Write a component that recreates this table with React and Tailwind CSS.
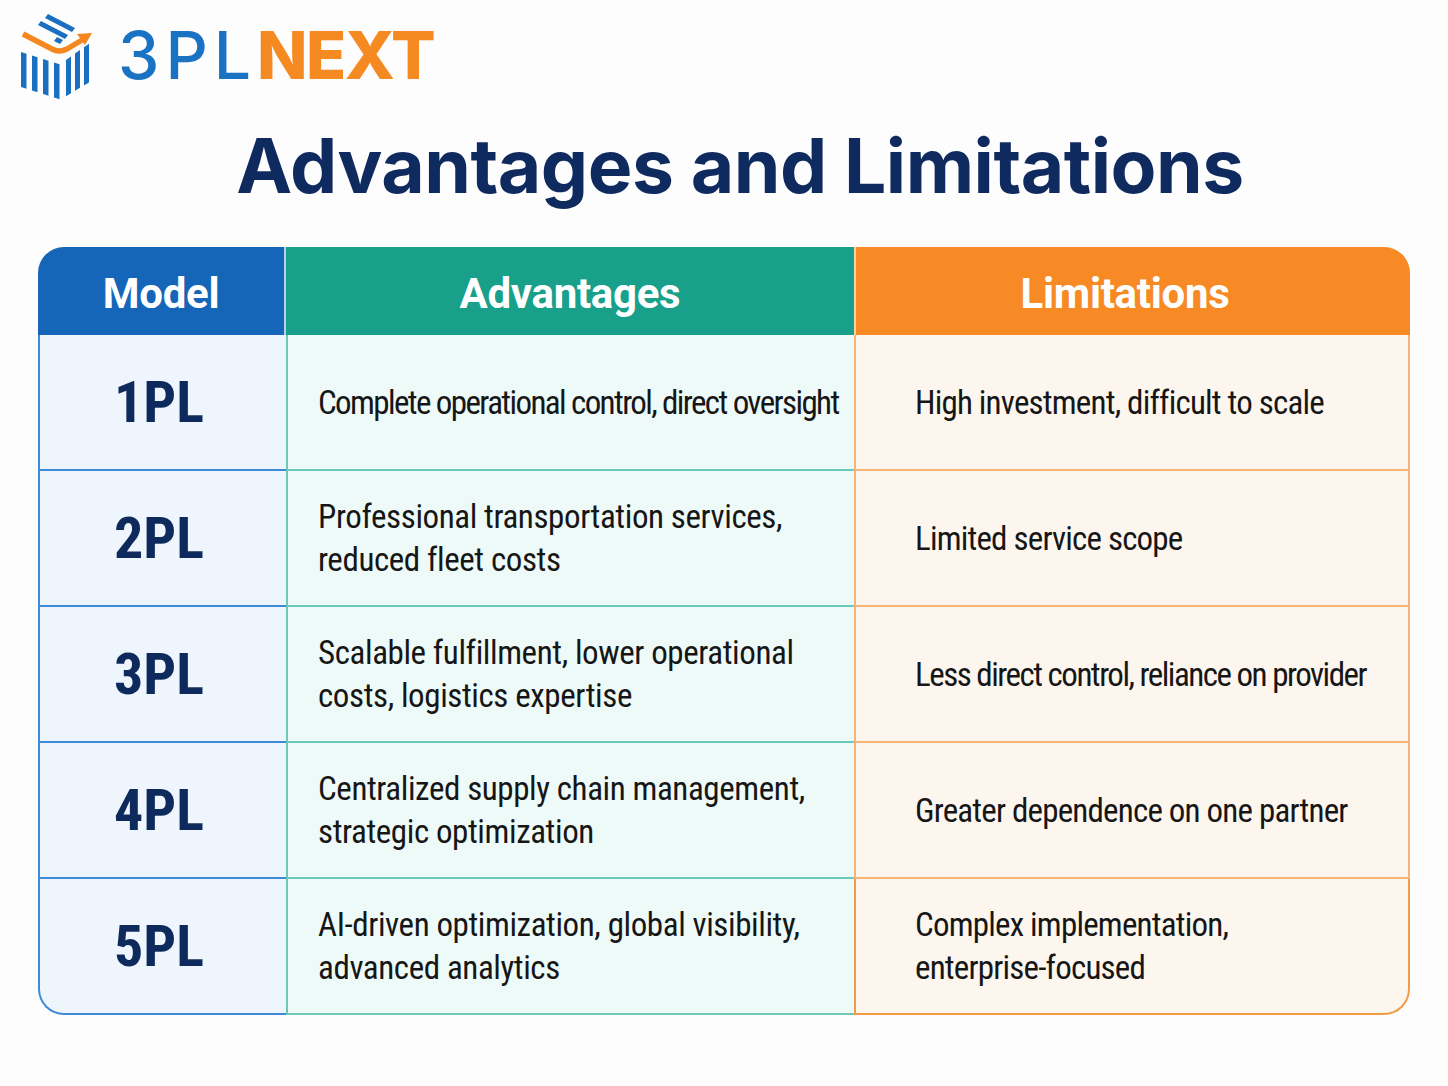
import React from "react";

// per-line tracking where the picture squeezes a long line into its cell
const rows = [
  {
    model: "1PL",
    adv: [["Complete operational control, direct oversight", "tracking-[-1.6px]"]],
    lim: [["High investment, difficult to scale"]],
  },
  {
    model: "2PL",
    adv: [["Professional transportation services,"], ["reduced fleet costs"]],
    lim: [["Limited service scope"]],
  },
  {
    model: "3PL",
    adv: [["Scalable fulfillment, lower operational"], ["costs, logistics expertise"]],
    lim: [["Less direct control, reliance on provider", "tracking-[-1.5px]"]],
  },
  {
    model: "4PL",
    adv: [["Centralized supply chain management,"], ["strategic optimization"]],
    lim: [["Greater dependence on one partner"]],
  },
  {
    model: "5PL",
    adv: [["AI-driven optimization, global visibility,"], ["advanced analytics"]],
    lim: [["Complex implementation,"], ["enterprise-focused"]],
  },
];

const condensed = {
  fontFamily: '"Roboto Condensed", "Roboto", sans-serif',
  fontStretch: "75%",
};

function LogoMark() {
  const left = [6, 17, 28, 39];
  const right = [51, 60, 69];
  return (
    <svg viewBox="0 0 85 90" className="h-[90px] w-[85px]" aria-hidden="true">
      {left.map((x) => {
        const w = 5.5;
        const t = (v) => 42 + (v - 6) * 0.32;
        const b = (v) => 77 + (v - 6) * 0.32;
        return (
          <polygon
            key={x}
            points={`${x},${t(x)} ${x + w},${t(x + w)} ${x + w},${b(x + w)} ${x},${b(x)}`}
            fill="#1a6fc0"
          />
        );
      })}
      {right.map((x) => {
        const w = 5;
        const t = (v) => 52 - (v - 48) * 0.7;
        const b = (v) => 88 - (v - 48) * 0.6;
        return (
          <polygon
            key={x}
            points={`${x},${t(x)} ${x + w},${t(x + w)} ${x + w},${b(x + w)} ${x},${b(x)}`}
            fill="#1a6fc0"
          />
        );
      })}
      <polygon points="33,4 60,18 57,22 30,8" fill="#1a6fc0" />
      <polygon points="26,11 53,25 50,29 23,15" fill="#1a6fc0" />
      <polygon points="42,27 48,30 45,34 39,31" fill="#1a6fc0" />
      <path
        d="M8 24 L37 39 Q44 43 52 39 L67 30"
        fill="none"
        stroke="#f5871f"
        strokeWidth="5.5"
        strokeLinejoin="round"
      />
      <polygon points="77,23 62,24 70,35" fill="#f5871f" />
    </svg>
  );
}

function HeaderCell({ children, className = "" }) {
  return (
    <div
      className={[
        "flex h-[88px] items-center justify-center pt-1 text-[42px] font-bold tracking-[-0.3px] text-white",
        className,
      ].join(" ")}
      style={{ fontFamily: '"Roboto", "Liberation Sans", sans-serif' }}
    >
      {children}
    </div>
  );
}

function TextCell({ lines, tracking = "tracking-[-0.4px]", className = "" }) {
  return (
    <div
      className={[
        "flex h-[136px] flex-col justify-center text-[33px] leading-[43px] text-[#161616]",
        className,
      ].join(" ")}
      style={condensed}
    >
      {lines.map(([text, own]) => (
        <p key={text} className={own || tracking}>
          {text}
        </p>
      ))}
    </div>
  );
}

export default function App() {
  return (
    <div className="min-h-[1086px] w-[1448px] bg-[#fdfdfe]">
      <div className="flex items-center gap-[18px] pl-[15px] pt-[10px]">
        <LogoMark />
        <div
          className="flex text-[66px] leading-none"
          style={{ fontFamily: '"Inter", "Liberation Sans", sans-serif' }}
        >
          <span className="font-medium tracking-[6px] text-[#1a73c2]">3PL</span>
          <span className="font-extrabold tracking-[-1.5px] text-[#f68a22]">NEXT</span>
        </div>
      </div>

      <h1
        className="pl-8 pt-[28px] text-center text-[75px] font-bold leading-none tracking-[-0.5px] text-[#0f2a5e]"
        style={{ fontFamily: '"Inter", "Liberation Sans", sans-serif' }}
      >
        Advantages and Limitations
      </h1>

      <div className="mx-[38px] mt-[44px] grid grid-cols-[248px_568px_556px]">
        <HeaderCell className="rounded-tl-[26px] border-r-2 border-white/70 bg-[#1565b8]">
          Model
        </HeaderCell>
        <HeaderCell className="bg-[#19a08b]">Advantages</HeaderCell>
        <HeaderCell className="rounded-tr-[26px] border-l-2 border-white/60 bg-[#f78a24] pr-4">
          Limitations
        </HeaderCell>

        {rows.map((row, i) => {
          const last = i === rows.length - 1;
          return (
            <React.Fragment key={row.model}>
              <div
                className={[
                  "flex h-[136px] items-center justify-center border-b-2 border-l-2 border-[#3d8ad6] bg-[#eef5fd] pr-2 text-[58px] font-bold text-[#0e2a5c]",
                  last ? "rounded-bl-[26px]" : "",
                ].join(" ")}
                style={condensed}
              >
                {row.model}
              </div>
              <TextCell
                lines={row.adv}
                className="border-b-2 border-l-2 border-[#6cc9b8] bg-[#eefaf8] pl-[30px]"
              />
              <TextCell
                lines={row.lim}
                tracking="tracking-[-0.8px]"
                className={[
                  "border-b-2 border-l-2 border-r-2 bg-[#fdf6ef] pl-[59px]",
                  last ? "rounded-br-[26px] border-[#f39a45]" : "border-[#f6b576]",
                ].join(" ")}
              />
            </React.Fragment>
          );
        })}
      </div>
    </div>
  );
}
